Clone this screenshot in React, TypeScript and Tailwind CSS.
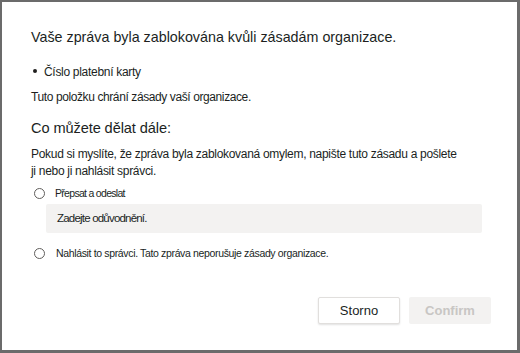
import React from "react";

function Radio() {
  return (
    <span className="inline-block w-[11px] h-[11px] rounded-full border border-[#605e5c] bg-white shrink-0" />
  );
}

export default function App() {
  return (
    <div
      className="w-[520px] h-[353px] bg-white border-l-2 border-t-2 border-r-[3px] border-b-[3px] border-[#6b6b6b] flex flex-col text-[#201f1e]"
      style={{ fontFamily: '"Liberation Sans", Arial, sans-serif' }}
    >
      <div className="pl-[29px] pr-[26px] pt-[25px] flex flex-col">
        <div className="text-[14.3px] leading-[20px]">Vaše zpráva byla zablokována kvůli zásadám organizace.</div>
        <div className="mt-[17px] flex items-center text-[12px] leading-[16px]">
          <span className="w-[4px] h-[4px] rounded-full bg-[#201f1e] ml-[2px] mr-[7px] -mt-[3px]" />
          <span className="tracking-[-0.3px]">Číslo platební karty</span>
        </div>
        <div className="mt-[9px] text-[12px] leading-[16px] tracking-[-0.4px]">Tuto položku chrání zásady vaší organizace.</div>
        <div className="mt-[13px] text-[14.6px] leading-[20px] tracking-[-0.1px]">Co můžete dělat dále:</div>
        <div className="mt-[8px] text-[12px] leading-[17px] tracking-[-0.3px]">
          Pokud si myslíte, že zpráva byla zablokovaná omylem, napište tuto zásadu a pošlete
          <br />
          ji nebo ji nahlásit správci.
        </div>
        <div className="mt-[6px] flex items-center gap-[10px] pl-[3px] text-[10.5px] leading-[14px]">
          <Radio />
          <span className="tracking-[-0.7px]">Přepsat a odeslat</span>
        </div>
        <div className="mt-[4px] ml-[15px] w-[436px] h-[29px] bg-[#f3f2f1] rounded-[2px] flex items-center pl-[11px] text-[11.5px] tracking-[-0.8px]">
          Zadejte odůvodnění.
        </div>
        <div className="mt-[13px] flex items-center gap-[11px] pl-[3px] text-[10.5px] leading-[14px]">
          <Radio />
          <span className="tracking-[-0.35px]">Nahlásit to správci. Tato zpráva neporušuje zásady organizace.</span>
        </div>
      </div>
      <div className="mt-auto mb-[26px] pr-[26px] flex justify-end gap-[9px]">
        <button className="w-[82px] h-[27px] bg-white border border-[#e1dfdd] rounded-[2px] shadow-[0_1px_2px_rgba(0,0,0,0.12)] text-[13px] text-[#201f1e]">
          Storno
        </button>
        <button className="w-[82px] h-[27px] bg-[#f3f2f1] rounded-[2px] text-[13px] font-semibold text-[#c8c6c4]">
          Confirm
        </button>
      </div>
    </div>
  );
}
